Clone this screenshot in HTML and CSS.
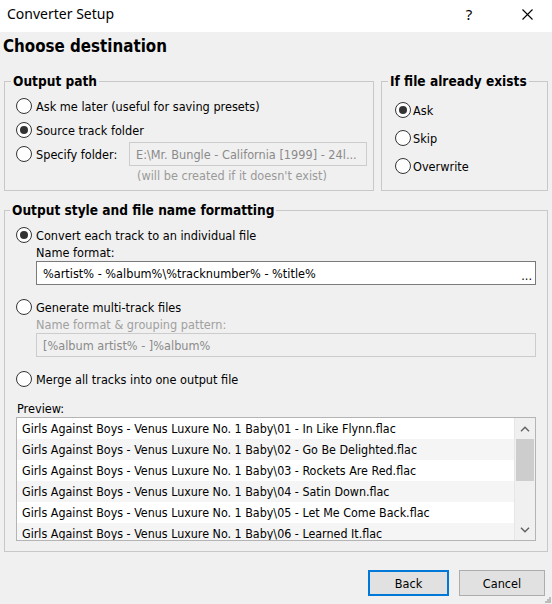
FILE: index.html
```html
<!DOCTYPE html>
<html lang="en">
<head>
<meta charset="utf-8">
<title>Converter Setup</title>
<link rel="stylesheet" href="styles.css">
</head>
<body>
<div class="window">
  <div class="titlebar">
    <span class="title">Converter Setup</span>
    <span class="caption-btn help">?</span>
    <span class="caption-btn close">
      <svg width="11" height="11" viewBox="0 0 11 11"><path d="M0.5 0.5 L10.5 10.5 M10.5 0.5 L0.5 10.5" stroke="#000" stroke-width="1.1" fill="none"/></svg>
    </span>
  </div>
  <div class="main">
    <h1 class="heading">Choose destination</h1>
    <div class="top-row">
      <fieldset class="group group-path">
        <legend>Output path</legend>
        <div class="radio-row"><span class="radio"></span><span>Ask me later (useful for saving presets)</span></div>
        <div class="radio-row"><span class="radio checked"></span><span>Source track folder</span></div>
        <div class="radio-row"><span class="radio"></span><span>Specify folder:</span><div class="textbox disabled folder">E:\Mr. Bungle - California [1999] - 24l...</div></div>
        <div class="hint">(will be created if it doesn't exist)</div>
      </fieldset>
      <fieldset class="group group-exists">
        <legend>If file already exists</legend>
        <div class="radio-row tall"><span class="radio checked"></span><span>Ask</span></div>
        <div class="radio-row tall"><span class="radio"></span><span>Skip</span></div>
        <div class="radio-row tall"><span class="radio"></span><span>Overwrite</span></div>
      </fieldset>
    </div>
    <fieldset class="group group-style">
      <legend>Output style and file name formatting</legend>
      <div class="radio-row short"><span class="radio checked"></span><span>Convert each track to an individual file</span></div>
      <div class="field-label">Name format:</div>
      <div class="textbox wide"><span>%artist% - %album%\%tracknumber% - %title%</span><span class="dots">...</span></div>
      <div class="radio-row short gap-top"><span class="radio"></span><span>Generate multi-track files</span></div>
      <div class="field-label disabled-text">Name format &amp; grouping pattern:</div>
      <div class="textbox wide disabled"><span>[%album artist% - ]%album%</span></div>
      <div class="radio-row short gap-top"><span class="radio"></span><span>Merge all tracks into one output file</span></div>
      <div class="preview-label">Preview:</div>
      <div class="list">
        <div class="rows">
          <div class="row">Girls Against Boys - Venus Luxure No. 1 Baby\01 - In Like Flynn.flac</div>
          <div class="row">Girls Against Boys - Venus Luxure No. 1 Baby\02 - Go Be Delighted.flac</div>
          <div class="row">Girls Against Boys - Venus Luxure No. 1 Baby\03 - Rockets Are Red.flac</div>
          <div class="row">Girls Against Boys - Venus Luxure No. 1 Baby\04 - Satin Down.flac</div>
          <div class="row">Girls Against Boys - Venus Luxure No. 1 Baby\05 - Let Me Come Back.flac</div>
          <div class="row">Girls Against Boys - Venus Luxure No. 1 Baby\06 - Learned It.flac</div>
        </div>
        <div class="scrollbar">
          <div class="sb-btn"><svg width="10" height="6" viewBox="0 0 10 6"><path d="M1 5.2 L5 1.2 L9 5.2" stroke="#606060" stroke-width="1.4" fill="none"/></svg></div>
          <div class="sb-track"><div class="sb-thumb"></div></div>
          <div class="sb-btn"><svg width="10" height="6" viewBox="0 0 10 6"><path d="M1 0.8 L5 4.8 L9 0.8" stroke="#606060" stroke-width="1.4" fill="none"/></svg></div>
        </div>
      </div>
    </fieldset>
    <div class="buttons">
      <button class="btn default">Back</button>
      <button class="btn">Cancel</button>
    </div>
  </div>
  <svg class="grip" width="6" height="6" viewBox="0 0 6 6"><rect x="4" y="0" width="2" height="2" fill="#bcbcbc"/><rect x="2" y="2" width="2" height="2" fill="#bcbcbc"/><rect x="4" y="2" width="2" height="2" fill="#bcbcbc"/><rect x="0" y="4" width="2" height="2" fill="#bcbcbc"/><rect x="2" y="4" width="2" height="2" fill="#bcbcbc"/><rect x="4" y="4" width="2" height="2" fill="#bcbcbc"/></svg>
</div>
</body>
</html>
```

FILE: styles.css
```css
* { box-sizing: border-box; }
html, body { margin: 0; padding: 0; }
body {
  width: 552px;
  height: 604px;
  overflow: hidden;
  background: #f0f0f0;
  font-family: "DejaVu Sans Condensed", "DejaVu Sans", sans-serif;
  font-size: 12.6px;
  color: #000;
}
.window { position: relative; width: 552px; height: 604px; }

.titlebar {
  height: 32px;
  background: #fff;
  display: flex;
  align-items: center;
  padding-bottom: 5px;
  font-family: "Noto Sans", sans-serif;
  font-size: 14px;
}
.title { flex: 1; padding-left: 7px; }
.caption-btn { width: 50px; display: flex; justify-content: center; align-items: center; }
.help { margin-right: 8px; font-size: 15px; }
.close { padding-top: 2px; }

.main { padding: 0 4px 0 4px; }
.heading {
  margin: 4px 0 0 -1px;
  font-size: 16.8px;
  line-height: 20px;
  font-weight: bold;
}

.top-row { display: flex; gap: 7px; margin-top: 17px; }

.group {
  margin: 0;
  min-width: 0;
  border: 1px solid #c8c8c8;
}
.group legend {
  font-weight: bold;
  font-size: 13.6px;
  line-height: 16px;
  padding: 0 2px;
  white-space: nowrap;
}
.group-path { width: 370px; padding: 5px 6px 6px 11px; }
.group-path legend { margin-left: -5px; }
.group-exists { width: 167px; padding: 7px 6px 0 13px; }
.group-exists legend { margin-left: -7px; }
.group-exists .radio { margin-right: 2px; }

.radio-row { display: flex; align-items: center; height: 24px; white-space: nowrap; }
.radio-row.tall { height: 28px; }
.radio-row.short { height: 20px; }
.radio-row.gap-top { margin-top: 12px; }

.radio {
  flex: none;
  width: 16px;
  height: 16px;
  border: 1px solid #333;
  border-radius: 50%;
  background: #fff;
  margin-right: 4px;
  display: flex;
  align-items: center;
  justify-content: center;
}
.radio.checked::after {
  content: "";
  width: 8px;
  height: 8px;
  border-radius: 50%;
  background: #333;
}

.textbox {
  height: 24px;
  border: 1px solid #7a7a7a;
  background: #fff;
  display: flex;
  align-items: center;
  justify-content: space-between;
  padding: 0 3px 0 6px;
  white-space: nowrap;
  overflow: hidden;
}
.textbox.disabled { border-color: #cccccc; background: #f0f0f0; color: #8a8a8a; }
.folder { width: 238px; margin-left: auto; }
.wide { margin-left: 20px; margin-top: 1px; }
.dots { align-self: flex-end; line-height: 16px; }

.hint { margin-left: 121px; margin-top: 2px; color: #9a9a9a; height: 16px; line-height: 16px; }

.group-style { margin-top: 11px; padding: 7px 11px 10px 11px; }
.group-style legend { margin-left: -6px; }
.field-label { margin-left: 20px; margin-top: 1px; height: 14px; line-height: 14px; }
.disabled-text { color: #a0a0a0; }
.preview-label { margin-top: 13px; height: 14px; line-height: 14px; padding-left: 1px; }

.list {
  margin-top: 1px;
  height: 124px;
  border: 1px solid #b4b4b4;
  background: #fff;
  display: flex;
  overflow: hidden;
}
.rows { flex: 1; overflow: hidden; }
.row { height: 21px; line-height: 21px; padding-left: 5px; white-space: nowrap; font-size: 12.4px; }
.row:nth-child(even) { background: #f5f5f5; }

.scrollbar {
  width: 21px;
  flex: none;
  background: #f0f0f0;
  display: flex;
  flex-direction: column;
  border-left: 1px solid #e6e6e6;
}
.sb-btn { height: 21px; flex: none; display: flex; align-items: center; justify-content: center; }
.sb-track { flex: 1; }
.sb-thumb { margin: 0 1px; height: 42px; background: #cdcdcd; }

.buttons { display: flex; justify-content: flex-end; gap: 10px; margin-top: 18px; padding-right: 3px; }
.btn {
  width: 86px;
  height: 26px;
  border: 1px solid #adadad;
  background: #e1e1e1;
  font-family: inherit;
  font-size: 12.6px;
  color: #000;
  padding: 0;
}
.btn.default { width: 81px; border: 2px solid #0078d7; }

.grip { position: absolute; right: 1px; bottom: 1px; }
```
